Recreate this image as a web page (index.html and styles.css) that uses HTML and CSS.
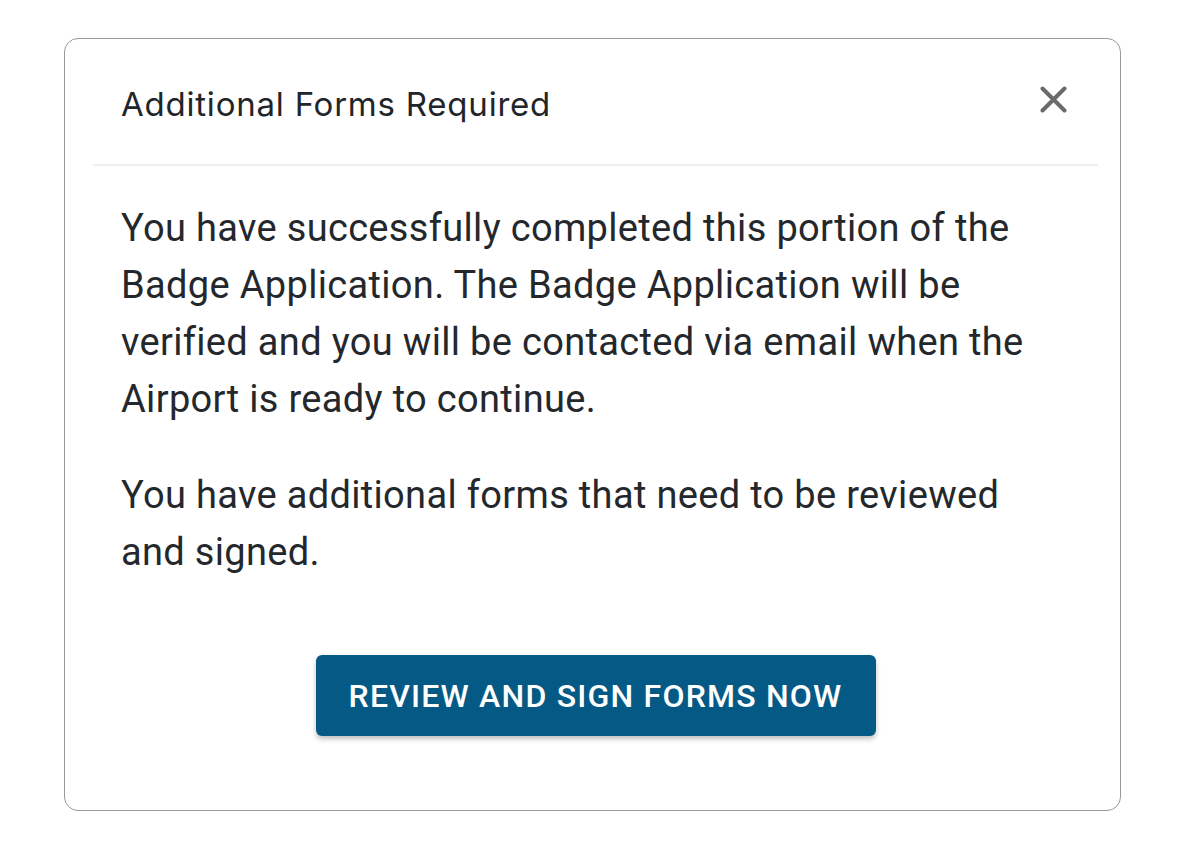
FILE: index.html
```html
<!DOCTYPE html>
<html lang="en">
<head>
<meta charset="utf-8">
<title>Additional Forms Required</title>
<link rel="stylesheet" href="styles.css">
</head>
<body>
<div class="modal">
  <div class="modal-header">
    <h2 class="modal-title">Additional Forms Required</h2>
    <button class="close" aria-label="Close">
      <svg width="27" height="27" viewBox="0 0 27 27"><path d="M2.5 2.5 L24.5 24.5 M24.5 2.5 L2.5 24.5" stroke="#6b6b6b" stroke-width="4" stroke-linecap="round" fill="none"/></svg>
    </button>
  </div>
  <div class="modal-body">
    <p>You have successfully completed this portion of the Badge Application. The Badge Application will be verified and you will be contacted via email when the Airport is ready to continue.</p>
    <p>You have additional forms that need to be reviewed and signed.</p>
    <div class="actions">
      <button class="btn-primary">Review and Sign Forms Now</button>
    </div>
  </div>
</div>
</body>
</html>
```
FILE: styles.css
```css
html, body {
  margin: 0;
  padding: 0;
  background: #ffffff;
}
body {
  font-family: Roboto, "Liberation Sans", sans-serif;
  color: #212529;
}
.modal {
  box-sizing: border-box;
  margin: 38px 0 0 64px;
  width: 1057px;
  height: 773px;
  border: 1px solid #9a9a9a;
  border-radius: 14px;
  background: #fff;
}
.modal-header {
  box-sizing: border-box;
  height: 127px;
  margin: 0 22px 0 28px;
  padding: 0 31px 0 28px;
  border-bottom: 2px solid #eeeeee;
  display: flex;
  align-items: center;
  justify-content: space-between;
}
.modal-title {
  margin: 0;
  font-family: Inter, "Open Sans", sans-serif;
  font-weight: 400;
  font-size: 33px;
  letter-spacing: 0.78px;
  color: #212529;
  margin-top: 4px;
}
.close {
  border: 0;
  background: none;
  padding: 0;
  width: 27px;
  height: 27px;
  margin-top: -4px;
  cursor: pointer;
}
.close svg { display: block; }
.modal-body {
  padding: 34px 58px 0 56px;
}
.modal-body p {
  margin: 0 0 39px 0;
  font-size: 38px;
  line-height: 57px;
  letter-spacing: 0.33px;
  color: #24282c;
}
.modal-body p:last-of-type { margin-bottom: 0; }
.actions {
  display: flex;
  justify-content: center;
  padding: 74px 0 0 8px;
}
.btn-primary {
  width: 560px;
  height: 81px;
  border: 0;
  border-radius: 6px;
  background: #055a85;
  color: #fff;
  font-family: Roboto, sans-serif;
  font-weight: 500;
  font-size: 32px;
  letter-spacing: 1.2px;
  text-transform: uppercase;
  box-shadow: 0 3px 5px rgba(0,0,0,0.25);
  cursor: pointer;
}
```
